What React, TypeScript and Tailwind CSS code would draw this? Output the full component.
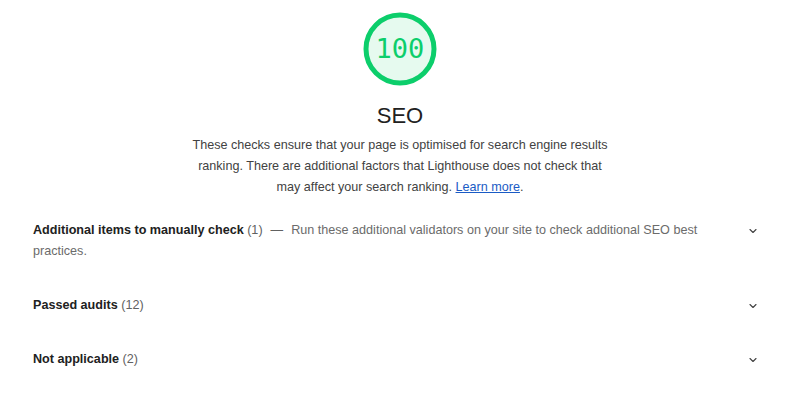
import { ChevronDown } from 'lucide-react';

const groups = [
  {
    title: 'Additional items to manually check',
    count: 1,
    desc: 'Run these additional validators on your site to check additional SEO best practices.',
  },
  { title: 'Passed audits', count: 12 },
  { title: 'Not applicable', count: 2 },
];

const Gauge = () => (
  <div className="relative w-[74px] h-[74px]">
    <svg viewBox="0 0 74 74" className="absolute inset-0">
      <circle cx="37" cy="37" r="34" fill="#e6faef" stroke="#0cce6b" strokeWidth="5" />
    </svg>
    <div className="relative flex h-full items-center justify-center text-[27px] text-[#0cce6b] font-['DejaVu_Sans_Mono',monospace]">
      100
    </div>
  </div>
);

export default function App() {
  return (
    <div className="w-[800px] h-[397px] bg-white font-['Liberation_Sans',Arial,sans-serif] text-[#212121] overflow-hidden">
      <div className="flex flex-col items-center pt-[12px]">
        <Gauge />
        <div className="mt-[17px] text-[22px] leading-[26px]">SEO</div>
        <p className="mt-[6px] w-[430px] text-center text-[12.6px] leading-[21px] text-[#424242]">
          These checks ensure that your page is optimised for search engine results ranking. There are additional
          factors that Lighthouse does not check that may affect your search ranking.{' '}
          <a href="#" className="text-[#1a5bc5] underline">
            Learn more
          </a>
          .
        </p>
      </div>

      <div className="mt-[14px] px-[33px]">
        {groups.map((g) => (
          <div key={g.title} className="flex items-start justify-between py-[8px] mb-[17px]">
            <div className="text-[12.6px] leading-[21px] max-w-[690px]">
              <span className="font-bold">{g.title}</span>{' '}
              <span className="text-[#616161]">({g.count})</span>
              {g.desc && (
                <>
                  <span className="text-[#616161] mx-[8px]">—</span>
                  <span className="text-[#6b6b6b]">{g.desc}</span>
                </>
              )}
            </div>
            <ChevronDown size={12} strokeWidth={2.25} className="mt-[5px] mr-[8px] text-[#424242] shrink-0" />
          </div>
        ))}
      </div>
    </div>
  );
}
